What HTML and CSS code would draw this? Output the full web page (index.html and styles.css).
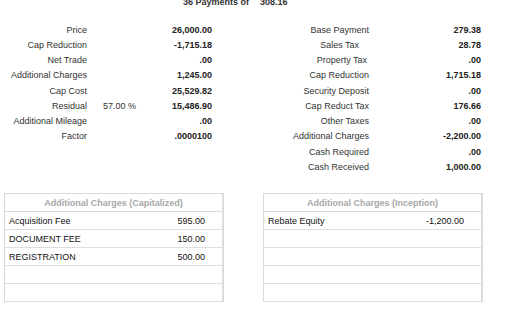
FILE: index.html
```html
<!DOCTYPE html>
<html>
<head>
<meta charset="utf-8">
<link rel="stylesheet" href="styles.css">
</head>
<body>
<div class="page">
  <div class="payline">
    <span class="pay-label">36 Payments of</span>
    <span class="pay-amount">308.16</span>
  </div>

  <div class="summary">
    <div class="block block-left">
      <div class="lbl">Price</div><div class="pct"></div><div class="val">26,000.00</div>
      <div class="lbl">Cap Reduction</div><div class="pct"></div><div class="val">-1,715.18</div>
      <div class="lbl">Net Trade</div><div class="pct"></div><div class="val">.00</div>
      <div class="lbl">Additional Charges</div><div class="pct"></div><div class="val">1,245.00</div>
      <div class="lbl">Cap Cost</div><div class="pct"></div><div class="val">25,529.82</div>
      <div class="lbl">Residual</div><div class="pct">57.00 %</div><div class="val">15,486.90</div>
      <div class="lbl">Additional Mileage</div><div class="pct"></div><div class="val">.00</div>
      <div class="lbl">Factor</div><div class="pct"></div><div class="val">.0000100</div>
    </div>
    <div class="block block-right">
      <div class="lbl">Base Payment</div><div class="val">279.38</div>
      <div class="lbl lbl-pad-lg">Sales Tax</div><div class="val">28.78</div>
      <div class="lbl lbl-pad-sm">Property Tax</div><div class="val">.00</div>
      <div class="lbl">Cap Reduction</div><div class="val">1,715.18</div>
      <div class="lbl">Security Deposit</div><div class="val">.00</div>
      <div class="lbl">Cap Reduct Tax</div><div class="val">176.66</div>
      <div class="lbl">Other Taxes</div><div class="val">.00</div>
      <div class="lbl">Additional Charges</div><div class="val">-2,200.00</div>
      <div class="lbl">Cash Required</div><div class="val">.00</div>
      <div class="lbl">Cash Received</div><div class="val">1,000.00</div>
    </div>
  </div>

  <div class="tables">
    <table class="charges charges-left">
      <tr><th colspan="2">Additional Charges (Capitalized)</th></tr>
      <tr><td class="name">Acquisition Fee</td><td class="amt">595.00</td></tr>
      <tr><td class="name">DOCUMENT FEE</td><td class="amt">150.00</td></tr>
      <tr><td class="name">REGISTRATION</td><td class="amt">500.00</td></tr>
      <tr><td class="name"></td><td class="amt"></td></tr>
      <tr><td class="name"></td><td class="amt"></td></tr>
    </table>
    <table class="charges charges-right">
      <tr><th colspan="2">Additional Charges (Inception)</th></tr>
      <tr><td class="name">Rebate Equity</td><td class="amt">-1,200.00</td></tr>
      <tr><td class="name"></td><td class="amt"></td></tr>
      <tr><td class="name"></td><td class="amt"></td></tr>
      <tr><td class="name"></td><td class="amt"></td></tr>
      <tr><td class="name"></td><td class="amt"></td></tr>
    </table>
  </div>
</div>
</body>
</html>
```

FILE: styles.css
```css
html, body {
  margin: 0;
  padding: 0;
  background: #ffffff;
}

body {
  font-family: "Liberation Sans", Arial, sans-serif;
  font-size: 9px;
  color: #333333;
  overflow: hidden;
}

.page {
  width: 508px;
  margin-top: -3px;
}

.payline {
  display: flex;
  height: 10px;
  line-height: 10px;
  font-weight: bold;
  color: #333333;
  padding-left: 183px;
  white-space: nowrap;
}

.pay-label {
  width: 77px;
  flex: none;
}

.summary {
  display: flex;
  margin-top: 15.5px;
  align-items: flex-start;
}

.block {
  display: grid;
  grid-auto-rows: 15.25px;
  line-height: 15.25px;
}

.block-left {
  width: 212px;
  grid-template-columns: 87px 16px 40px 1fr;
}

.block-left .lbl {
  grid-column: 1;
}

.block-left .pct {
  grid-column: 3;
}

.block-left .val {
  grid-column: 4;
}

.block-right {
  margin-left: 38px;
  width: 231px;
  grid-template-columns: 119px 1fr;
}

.lbl {
  text-align: right;
  white-space: nowrap;
}

.lbl-pad-lg {
  padding-right: 10px;
}

.lbl-pad-sm {
  padding-right: 2px;
}

.pct {
  text-align: left;
}

.val {
  text-align: right;
  font-weight: bold;
  color: #222222;
}

.tables {
  display: flex;
  margin-top: 18px;
  padding-left: 4px;
  gap: 39px;
}

.charges {
  width: 220px;
  border-collapse: collapse;
  border: 1px solid #d9d9d9;
  border-right: 2px solid #dcdcdc;
  table-layout: fixed;
}

.charges th {
  height: 17px;
  padding: 0;
  font-weight: bold;
  color: #a8a8a8;
  text-align: center;
  border-bottom: 1px solid #d9d9d9;
}

.charges td {
  height: 17px;
  padding: 0;
  border-bottom: 1px solid #dedede;
  color: #111111;
}

.charges .name {
  padding-left: 4px;
  text-align: left;
}

.charges .amt {
  width: 80px;
  padding-right: 17px;
  text-align: right;
}
```
